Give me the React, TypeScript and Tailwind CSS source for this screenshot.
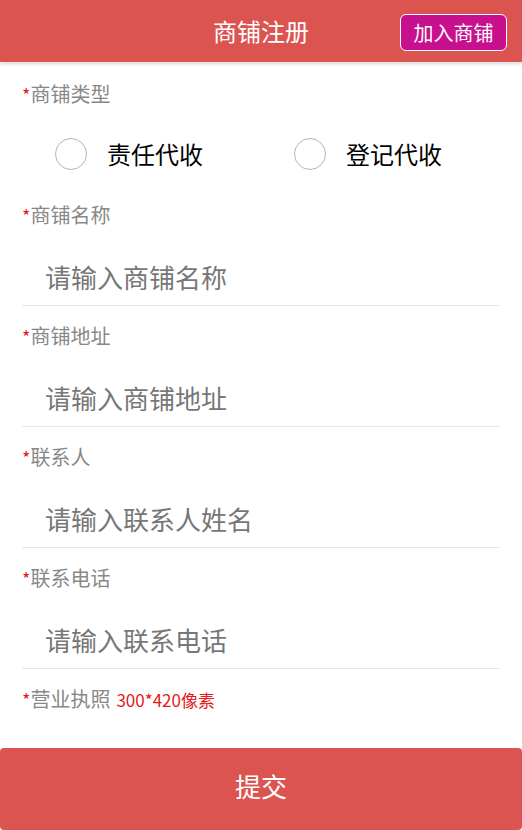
const fields = [
  { label: "商铺名称", placeholder: "请输入商铺名称" },
  { label: "商铺地址", placeholder: "请输入商铺地址" },
  { label: "联系人", placeholder: "请输入联系人姓名" },
  { label: "联系电话", placeholder: "请输入联系电话" },
];

function Label({ text, extra }: { text: string; extra?: string }) {
  return (
    <div className="h-[20px] leading-[20px] text-[20px] text-[#888]">
      <span className="text-[#e21b1b] text-[18px]">*</span>
      {text}
      {extra && <span className="ml-[6px] text-[17px] text-[#e21b1b]">{extra}</span>}
    </div>
  );
}

export default function App() {
  const types = ["责任代收", "登记代收"];

  return (
    <div className="min-h-[830px] bg-white font-['Noto_Sans_CJK_SC','Noto_Sans',sans-serif] relative pb-[90px]">
      {/* Header */}
      <header className="relative h-[62px] bg-[#dc5450] shadow-[0_2px_4px_rgba(0,0,0,0.15)] flex items-center justify-center">
        <h1 className="text-[24px] text-white leading-none">商铺注册</h1>
        <button className="absolute right-[15px] top-[14px] w-[107px] h-[37px] rounded-[6px] border border-white bg-[#c8108f] text-white text-[20px] leading-none">
          加入商铺
        </button>
      </header>

      <div className="px-[22px]">
        <div className="pt-[22px]">
          <Label text="商铺类型" />
        </div>

        <div className="mt-[19px] h-[62px] grid grid-cols-2">
          {types.map((t) => (
            <label key={t} className="flex items-center pl-[33px] gap-[20px]">
              <span className="w-[32px] h-[32px] rounded-full border-[1.5px] border-[#b5b5b5]" />
              <span className="text-[24px] text-black">{t}</span>
            </label>
          ))}
        </div>

        {fields.map((f) => (
          <div key={f.label}>
            <div className="pt-[20px]">
              <Label text={f.label} />
            </div>
            <input
              className="mt-[23px] h-[58px] w-full border-b border-[#e8e8e8] pl-[23px] text-[26px] outline-none placeholder:text-[#777]"
              placeholder={f.placeholder}
            />
          </div>
        ))}

        <div className="pt-[20px]">
          <Label text="营业执照" extra="300*420像素" />
        </div>
      </div>

      <button className="fixed bottom-0 left-0 w-full h-[82px] pb-[6px] rounded-[4px] bg-[#dc5450] text-white text-[26px] leading-none">
        提交
      </button>
    </div>
  );
}
